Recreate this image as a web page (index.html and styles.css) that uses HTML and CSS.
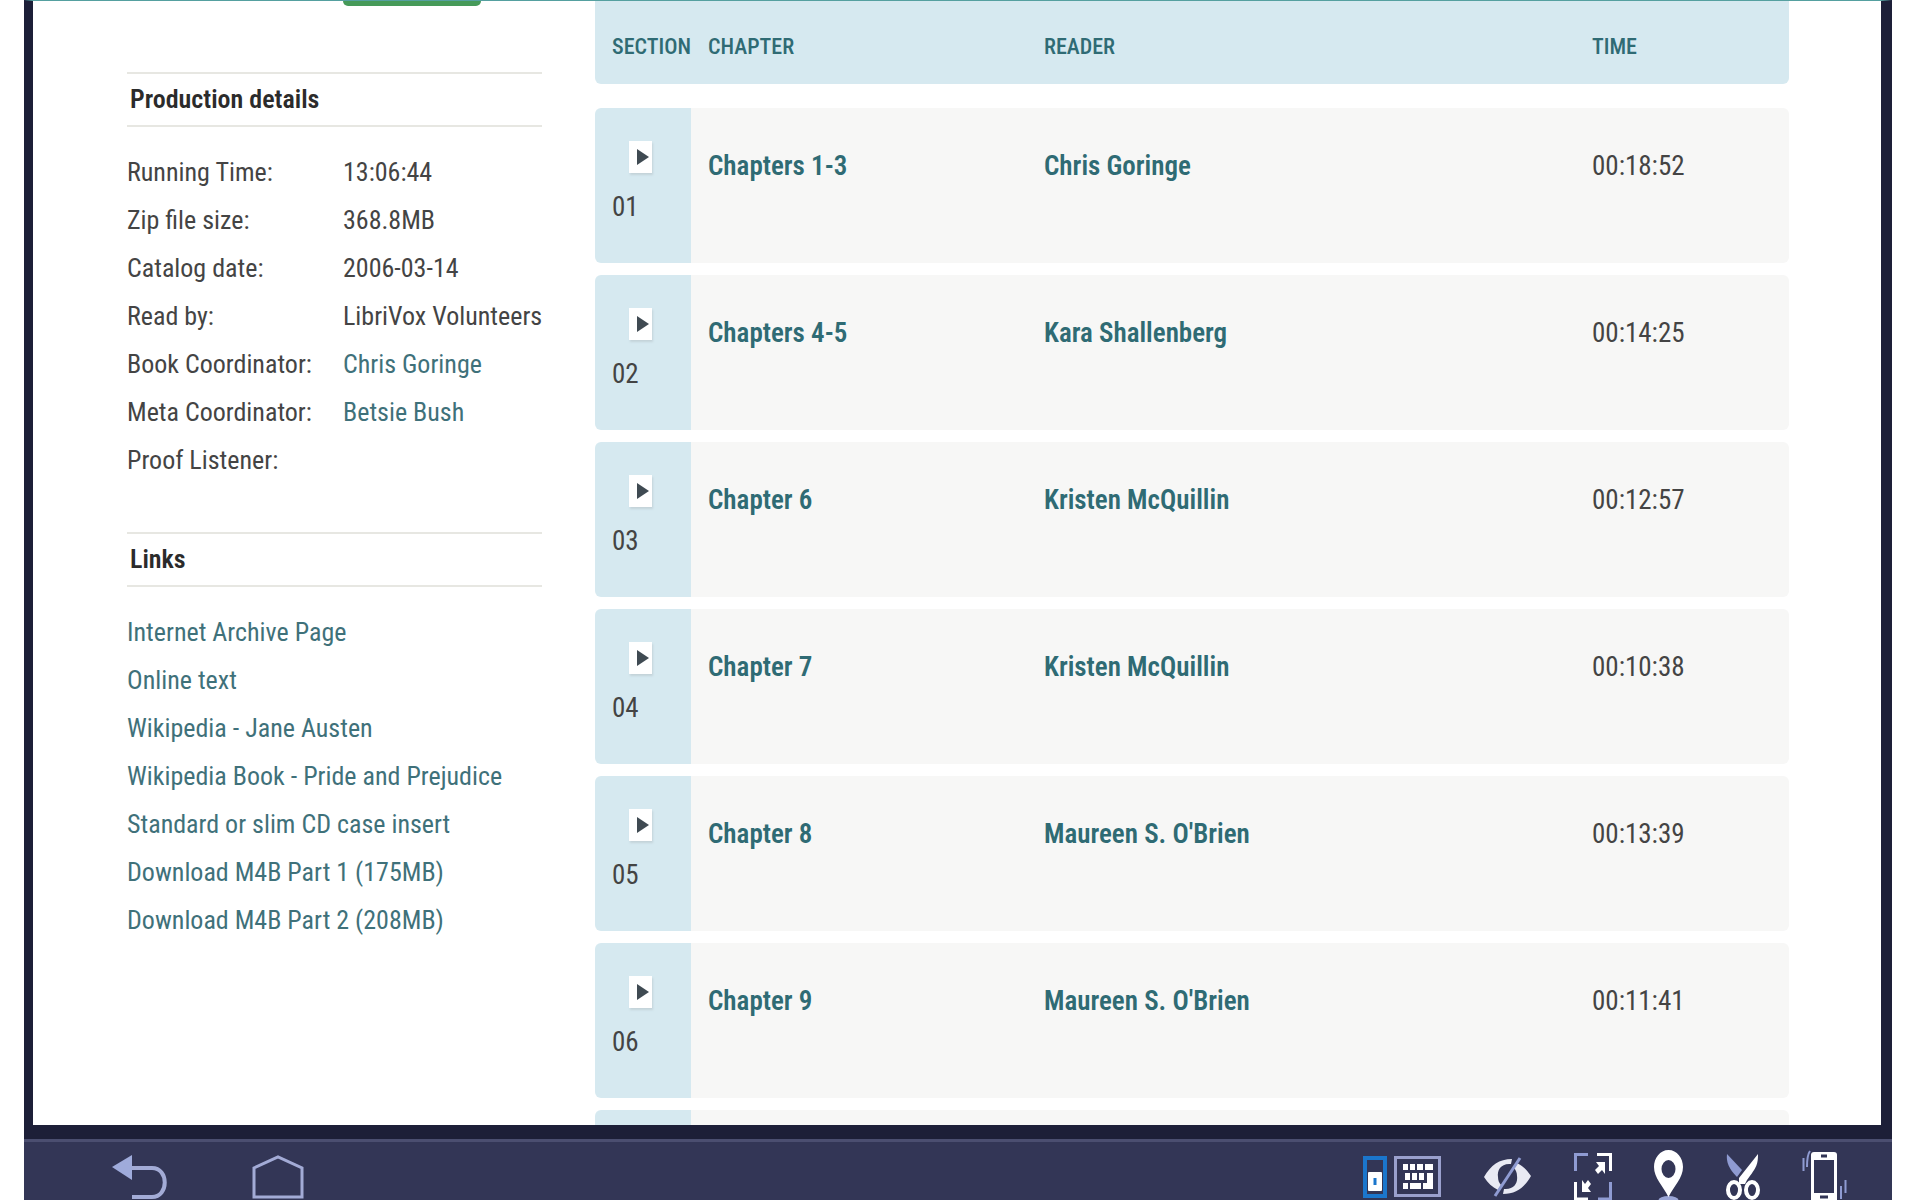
FILE: index.html
```html
<!DOCTYPE html>
<html lang="en">
<head>
    <meta charset="UTF-8">
    <meta name="viewport" content="width=device-width, initial-scale=1.0">
    <title>Pride and Prejudice - LibriVox</title>
    <link rel="stylesheet" href="styles.css">
</head>
<body>
    <div class="screen">
        <aside class="sidebar">
            <div class="download-edge"></div>

            <h2 class="side-title">Production details</h2>
            <dl class="details">
                <dt>Running Time:</dt>
                <dd>13:06:44</dd>
                <dt>Zip file size:</dt>
                <dd>368.8MB</dd>
                <dt>Catalog date:</dt>
                <dd>2006-03-14</dd>
                <dt>Read by:</dt>
                <dd>LibriVox Volunteers</dd>
                <dt>Book Coordinator:</dt>
                <dd><a href="#">Chris Goringe</a></dd>
                <dt>Meta Coordinator:</dt>
                <dd><a href="#">Betsie Bush</a></dd>
                <dt>Proof Listener:</dt>
                <dd></dd>
            </dl>

            <h2 class="side-title">Links</h2>
            <ul class="links">
                <li><a href="#">Internet Archive Page</a></li>
                <li><a href="#">Online text</a></li>
                <li><a href="#">Wikipedia - Jane Austen</a></li>
                <li><a href="#">Wikipedia Book - Pride and Prejudice</a></li>
                <li><a href="#">Standard or slim CD case insert</a></li>
                <li><a href="#">Download M4B Part 1 (175MB)</a></li>
                <li><a href="#">Download M4B Part 2 (208MB)</a></li>
            </ul>
        </aside>

        <main class="content">
            <table class="chapters">
                <thead>
                    <tr>
                        <th class="col-section">Section</th>
                        <th class="col-chapter">Chapter</th>
                        <th>Reader</th>
                        <th class="col-time">Time</th>
                    </tr>
                </thead>
                <tbody>
                    <tr>
                        <td><button class="play" aria-label="Play 01"></button>01</td>
                        <td><a href="#">Chapters 1-3</a></td>
                        <td><a href="#">Chris Goringe</a></td>
                        <td>00:18:52</td>
                    </tr>
                    <tr>
                        <td><button class="play" aria-label="Play 02"></button>02</td>
                        <td><a href="#">Chapters 4-5</a></td>
                        <td><a href="#">Kara Shallenberg</a></td>
                        <td>00:14:25</td>
                    </tr>
                    <tr>
                        <td><button class="play" aria-label="Play 03"></button>03</td>
                        <td><a href="#">Chapter 6</a></td>
                        <td><a href="#">Kristen McQuillin</a></td>
                        <td>00:12:57</td>
                    </tr>
                    <tr>
                        <td><button class="play" aria-label="Play 04"></button>04</td>
                        <td><a href="#">Chapter 7</a></td>
                        <td><a href="#">Kristen McQuillin</a></td>
                        <td>00:10:38</td>
                    </tr>
                    <tr>
                        <td><button class="play" aria-label="Play 05"></button>05</td>
                        <td><a href="#">Chapter 8</a></td>
                        <td><a href="#">Maureen S. O'Brien</a></td>
                        <td>00:13:39</td>
                    </tr>
                    <tr>
                        <td><button class="play" aria-label="Play 06"></button>06</td>
                        <td><a href="#">Chapter 9</a></td>
                        <td><a href="#">Maureen S. O'Brien</a></td>
                        <td>00:11:41</td>
                    </tr>
                    <tr>
                        <td></td>
                        <td></td>
                        <td></td>
                        <td></td>
                    </tr>
                </tbody>
            </table>
        </main>
    </div>

    <nav class="navbar">
        <div class="nav-left">
            <button aria-label="Back">
                <svg width="56" height="50" viewBox="0 0 56 50">
                    <path d="M0 17L20 5V30Z" fill="#9fabdb"/>
                    <path d="M20 18H40C57 18 57 47 40 47H20" fill="none" stroke="#a3abd6" stroke-width="4"/>
                </svg>
            </button>
            <button aria-label="Home">
                <svg width="52" height="50" viewBox="0 0 52 50">
                    <path d="M2 47V18L26 7L50 18V47Z" fill="none" stroke="#a3abd6" stroke-width="3"/>
                </svg>
            </button>
        </div>

        <div class="nav-right">
            <div class="nav-pair">
                <button aria-label="Lock">
                    <svg width="24" height="50" viewBox="0 0 24 50">
                        <rect x="2" y="8" width="20" height="38" fill="none" stroke="#1b76cc" stroke-width="4"/>
                        <rect x="5" y="22" width="14" height="19" rx="1" fill="#fff"/>
                        <rect x="10.500" y="28" width="3" height="7" fill="#1b76cc"/>
                    </svg>
                </button>
                <button aria-label="Keyboard">
                    <svg width="48" height="50" viewBox="0 0 48 50">
                        <rect x="1.500" y="7.500" width="44" height="38" fill="none" stroke="#9aa0cd" stroke-width="3"/>
                        <path d="M9 14h5v6h-5zM16 14h5v6h-5zM23 14h6v6h-6zM31 14h8v6h-8zM11 23h5v7h-5zM18 23h5v7h-5zM25 23h5v7h-5zM9 33h5v6h-5zM16 33h11v6H16zM33 23h6v16H29v-6h4z" fill="#fff"/>
                    </svg>
                </button>
            </div>
            <button aria-label="Hide">
                <svg width="48" height="50" viewBox="0 0 48 50">
                    <path d="M0 27C7 15 15 9 28 9L27 14C17 13 13 20 14 27C14 30 15 33 17 35L14 40C8 37 4 33 0 27Z" fill="#e9eaf3"/>
                    <path d="M0 27C7 15 15 9 28 9L27 14C17 13 13 20 14 27C14 30 15 33 17 35L14 40C8 37 4 33 0 27Z" fill="#e9eaf3" transform="rotate(180 23.500 26.500)"/>
                    <path d="M11 46L36 8" stroke="#8f9bd2" stroke-width="3"/>
                </svg>
            </button>
            <button aria-label="Full screen">
                <svg width="38" height="50" viewBox="0 0 38 50">
                    <g fill="none" stroke-width="3">
                        <path d="M1.500 21V4.500H14M36.500 32V49H24" stroke="#8f9bd2"/>
                        <path d="M23 4.500H36.500V21M1.500 32V49H14" stroke="#fff"/>
                    </g>
                    <path d="M22 12H31V24L28 20L24 24L21 20L25 16ZM8 30V42H17L14 38L17 34L14 30L11 34Z" fill="#fff"/>
                </svg>
            </button>
            <button aria-label="Location">
                <svg width="30" height="50" viewBox="0 0 30 50">
                    <ellipse cx="14.500" cy="50" rx="10" ry="4" fill="#9aa5d6"/>
                    <path fill-rule="evenodd" d="M14.500 0C6 0 0 8 0 17C0 28 9 36 14.500 47C20 36 29 28 29 17C29 8 23 0 14.500 0ZM14.500 10A7 9 0 1 1 14.500 28A7 9 0 1 1 14.500 10Z" fill="#fff"/>
                </svg>
            </button>
            <button aria-label="Cut">
                <svg width="34" height="50" viewBox="0 0 34 50">
                    <path d="M1 4L16 20L11 27C3 19 0 12 1 4Z" fill="#8f9bd2"/>
                    <path d="M32 4C32 14 31 17 21 30L19 34H13L13 28Z" fill="#fff"/>
                    <ellipse cx="8" cy="40" rx="6" ry="8" fill="none" stroke="#fff" stroke-width="4"/>
                    <ellipse cx="26" cy="40" rx="6" ry="8" fill="none" stroke="#fff" stroke-width="4"/>
                </svg>
            </button>
            <button aria-label="Shake">
                <svg width="45" height="50" viewBox="0 0 45 50">
                    <path d="M1.500 8V21M8 1Q5 5 5 17M43.500 30V43M39 36V49" fill="none" stroke="#8f9bd2" stroke-width="2"/>
                    <rect x="9" y="2" width="26" height="50" rx="3" fill="#fff"/>
                    <rect x="12" y="10" width="20" height="33" fill="#333656"/>
                    <path d="M19 6h6M18 47h8" stroke="#333656" stroke-width="3"/>
                </svg>
            </button>
        </div>
    </nav>
</body>
</html>
```

FILE: styles.css
```css
* {
    box-sizing: border-box;
}

body {
    margin: 0;
    padding: 0 28px 0 24px;
    height: 100vh;
    display: flex;
    flex-direction: column;
    overflow: hidden;
    background: #fff;
    color: #444;
    font-family: 'Roboto Condensed', 'Liberation Sans Narrow', Roboto, sans-serif;
    font-size: 27px;
    line-height: 36px;
}

a {
    color: #3f717a;
    text-decoration: none;
}

button {
    padding: 0;
    border: none;
    background: none;
    cursor: pointer;
}

.screen {
    flex: 1;
    min-height: 0;
    display: flex;
    gap: 53px;
    padding: 0 92px 0 94px;
    overflow: hidden;
    background: #fff;
    border: solid #1d1f38;
    border-width: 1px 11px 14px 9px;
    border-top-color: #55a0a0;
}

/* left column */
.sidebar {
    width: 415px;
    flex-shrink: 0;
    font-size: 26px;
}

.download-edge {
    width: 138px;
    height: 5px;
    margin: 0 0 66px 216px;
    border-radius: 0 0 5px 5px;
    background: #469a59;
}

.side-title {
    margin: 0 0 21px;
    padding: 8px 3px;
    border: solid #e7e7e2;
    border-width: 2px 0;
    color: #2b2b2b;
    font-size: 26px;
    font-weight: 600;
    line-height: 35px;
}

.details {
    display: grid;
    grid-template-columns: 216px 1fr;
    margin: 0 0 48px;
    line-height: 48px;
    white-space: nowrap;
}

.details dd {
    margin: 0;
}

.links {
    margin: 0;
    padding: 0;
    list-style: none;
    line-height: 48px;
    white-space: nowrap;
}

/* chapter list */
.content {
    flex: 1;
    min-width: 0;
}

.chapters {
    width: 100%;
    margin-top: -12px;
    table-layout: fixed;
    border-collapse: separate;
    border-spacing: 0 12px;
}

.col-section {
    width: 96px;
}

.col-chapter {
    width: 336px;
}

.col-time {
    width: 214px;
}

.chapters th {
    height: 83px;
    padding: 8px 0 0 17px;
    background: #d6e9f0;
    color: #2f6b74;
    font-size: 22px;
    font-weight: 500;
    text-align: left;
    text-transform: uppercase;
}

.chapters th:first-child {
    border-bottom-left-radius: 6px;
}

.chapters th:last-child {
    border-bottom-right-radius: 6px;
}

/* empty row, doubles the gap under the header */
.chapters tbody::before {
    content: '';
    display: block;
}

.chapters td {
    height: 155px;
    padding: 40px 0 0 17px;
    background: #f7f7f6;
    vertical-align: top;
}

.chapters td:first-child {
    padding-top: 33px;
    background: #d6e9f0;
    border-radius: 6px 0 0 6px;
}

.chapters td:last-child {
    border-radius: 0 6px 6px 0;
}

.chapters td a {
    color: #2f6b74;
    font-weight: 600;
}

.play {
    display: flex;
    align-items: center;
    justify-content: center;
    width: 23px;
    height: 32px;
    margin: 0 0 16px 17px;
    background: #fff;
    box-shadow: 1px 2px 2px #c3d3d9;
}

.play::before {
    content: '';
    border-left: 12px solid #3f4a52;
    border-top: 8px solid transparent;
    border-bottom: 8px solid transparent;
    margin-left: 4px;
}

/* bottom bar */
.navbar {
    display: flex;
    justify-content: space-between;
    height: 61px;
    padding: 8px 45px 0 88px;
    background: #333656;
    border-top: 3px solid #4b4e70;
}

.navbar svg {
    display: block;
}

.nav-left,
.nav-right,
.nav-pair {
    display: flex;
}

.nav-left {
    gap: 84px;
}

.nav-right {
    gap: 42px;
}

.nav-pair {
    gap: 7px;
}
```
